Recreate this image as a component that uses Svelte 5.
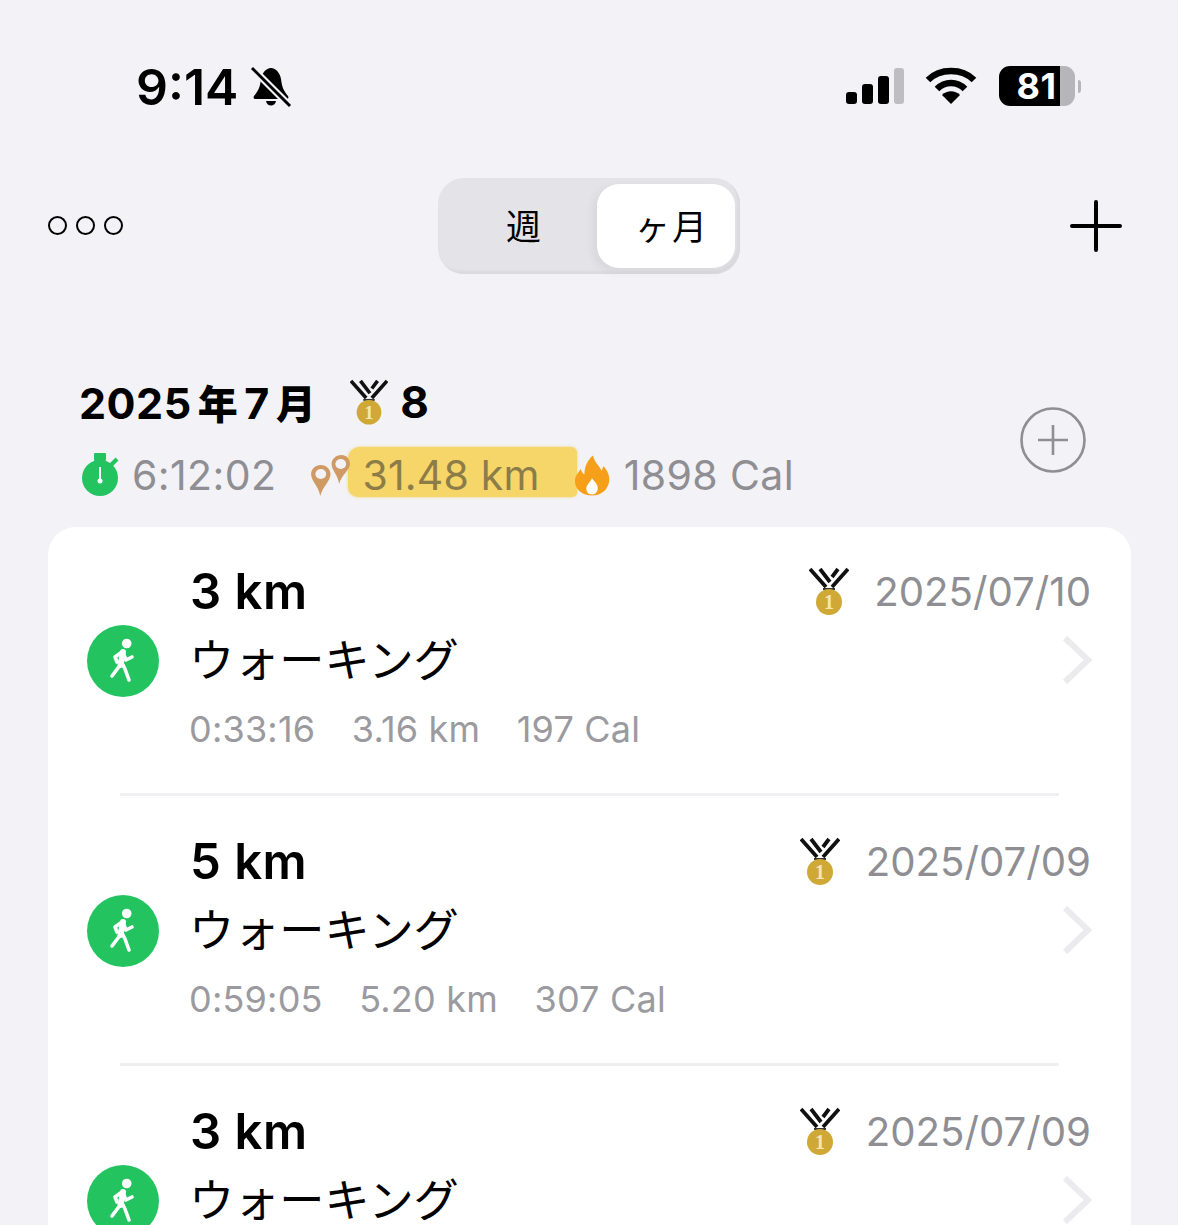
<script>
  const rows = [
    { title: '3 km', date: '2025/07/10', stats: ['0:33:16', '3.16 km', '197 Cal'] },
    { title: '5 km', date: '2025/07/09', stats: ['0:59:05', '5.20 km', '307 Cal'] },
    { title: '3 km', date: '2025/07/09', stats: [] }
  ];
</script>

{#snippet medal(size)}
  <svg class="medal" width={size} height={size * 1.2} viewBox="0 0 40 48" aria-hidden="true">
    <path d="M1 2 L17 20 M11 2 L21 15 M39 2 L23 20 M29 2 L23 10" fill="none" stroke="#111" stroke-width="3.8"/>
    <path d="M14 22 H26" stroke="#333" stroke-width="2"/>
    <circle cx="20" cy="35" r="13" fill="#cfa836"/>
    <text x="20" y="42" text-anchor="middle" class="medal-num">1</text>
  </svg>
{/snippet}

{#snippet chevron()}
  <svg class="chev" width="30" height="48" viewBox="0 0 30 48" aria-hidden="true">
    <path d="M3 2 L26 24 L3 46" fill="none" stroke="#ebebed" stroke-width="6"/>
  </svg>
{/snippet}

{#snippet walker()}
  <svg class="walker" width="72" height="72" viewBox="0 0 72 72" aria-hidden="true">
    <circle cx="36" cy="36" r="36" fill="#23c45f"/>
    <circle cx="39.7" cy="18.5" r="4.8" fill="#fff"/>
    <path d="M36 27 L33.5 40" fill="none" stroke="#fff" stroke-width="6" stroke-linecap="round"/>
    <path d="M34 39 L25 51 M35 38 L38 44 L42 55 M35 27 L28 32 L30 37 M37 30 L39 35 L45 32" fill="none" stroke="#fff" stroke-width="3.6" stroke-linecap="round" stroke-linejoin="round"/>
  </svg>
{/snippet}

<div class="screen">
  <header class="status">
    <div class="clock">
      <span class="time">9:14</span>
      <svg width="42" height="42" viewBox="0 0 42 42" aria-hidden="true">
        <path d="M21 2 C26 2 30 7 31 13 C32 22 34 25 38 30 C39 32 38 33 36 33 H6 C4 33 3 32 4 30 C8 25 10 22 11 13 C12 7 16 2 21 2 Z" fill="#000"/>
        <path d="M16 35 H26 C25 41 17 41 16 35 Z" fill="#000"/>
        <path d="M3 3 L39 39" stroke="#f2f2f7" stroke-width="7"/>
        <path d="M2 2 L40 40" stroke="#000" stroke-width="3"/>
      </svg>
    </div>
    <div class="indicators">
      <svg width="60" height="38" viewBox="0 0 60 38" aria-hidden="true">
        <rect x="1" y="25" width="11" height="12" rx="3" fill="#000"/>
        <rect x="17" y="17" width="11" height="20" rx="3" fill="#000"/>
        <rect x="33" y="9" width="11" height="28" rx="3" fill="#000"/>
        <rect x="49" y="1" width="10" height="36" rx="3" fill="#bdbdc2"/>
      </svg>
      <svg width="52" height="38" viewBox="0 0 52 38" aria-hidden="true">
        <path d="M3 13 C15 1 37 1 49 13" fill="none" stroke="#000" stroke-width="6.5"/>
        <path d="M12 22 C20 14 32 14 40 22" fill="none" stroke="#000" stroke-width="6.5"/>
        <path d="M17 28 C22 23 30 23 35 28 L26 37 Z" fill="#000"/>
      </svg>
      <div class="battery">
        <div class="batt-body"><span>81</span></div>
        <div class="batt-rest"></div>
        <div class="batt-tip"></div>
      </div>
    </div>
  </header>

  <nav class="toolbar">
    <div class="dots"><i></i><i></i><i></i></div>
    <div class="segment">
      <div class="seg-item">週</div>
      <div class="seg-item active">ヶ月</div>
    </div>
    <svg width="54" height="54" viewBox="0 0 54 54" aria-hidden="true">
      <path d="M27 3 V51 M3 27 H51" stroke="#000" stroke-width="4" stroke-linecap="round"/>
    </svg>
  </nav>

  <section class="summary">
    <div class="summary-main">
      <div class="month">
        <span class="month-text">2025<b>年</b>7<b>月</b></span>
        {@render medal(38)}
        <span class="count">8</span>
      </div>
      <div class="totals">
        <svg class="stopwatch" width="38" height="44" viewBox="0 0 38 44" aria-hidden="true">
          <rect x="13" y="0" width="12" height="8" rx="1" fill="#23c45f"/>
          <path d="M30 12 L36 6" stroke="#23c45f" stroke-width="4"/>
          <circle cx="19" cy="25" r="18" fill="#23c45f"/>
          <path d="M19 14 V27" stroke="#fff" stroke-width="2"/>
          <circle cx="19" cy="28" r="2.5" fill="#fff"/>
        </svg>
        <span class="total-value time-total">6:12:02</span>
        <svg class="pins" width="41" height="42" viewBox="0 0 38 42" preserveAspectRatio="none" aria-hidden="true">
          <path d="M29 1 C24 1 20 5 20 10 C20 16 26 21 27 30 C29 21 37 16 37 10 C37 5 34 1 29 1 Z" fill="#cf9a63"/>
          <circle cx="28.5" cy="10" r="5" fill="#f2f2f7"/>
          <path d="M10 11 C5 11 1 15 1 20 C1 27 8 32 9.5 42 C12 32 19 27 19 20 C19 15 15 11 10 11 Z" fill="#cf9a63"/>
          <circle cx="10" cy="20" r="5" fill="#f2f2f7"/>
        </svg>
        <span class="marker">31.48 km</span>
        <svg class="flame" width="36" height="41" viewBox="0 0 38 42" aria-hidden="true">
          <path d="M20 0 C22 8 27 11 29 16 C30 14 31 12 31 11 C36 17 38 22 37 28 C35 37 28 42 19 42 C9 42 1 36 1 27 C1 21 5 18 7 14 C8 17 9 19 11 20 C11 12 14 5 20 0 Z" fill="#f6a01a"/>
          <path d="M19 24 C22 28 26 31 25 36 C24 39 22 41 19 41 C15 41 13 38 13 35 C13 31 17 28 19 24 Z" fill="#fff"/>
        </svg>
        <span class="total-value">1898 Cal</span>
      </div>
    </div>
    <svg class="add" width="66" height="66" viewBox="0 0 66 66" aria-hidden="true">
      <circle cx="33" cy="33" r="31.5" fill="none" stroke="#8e8e93" stroke-width="2.6"/>
      <path d="M33 18 V48 M18 33 H48" stroke="#8e8e93" stroke-width="2.6"/>
    </svg>
  </section>

  <main class="card">
    {#each rows as row}
      <article class="row">
        {@render walker()}
        <div class="body">
          <div class="top">
            <span class="title">{row.title}</span>
            <div class="date-wrap">
              {@render medal(40)}
              <span class="date">{row.date}</span>
            </div>
          </div>
          <div class="mid">
            <span class="name">ウォーキング</span>
            {@render chevron()}
          </div>
          <div class="stats">
            {#each row.stats as stat}<span>{stat}</span>{/each}
          </div>
        </div>
      </article>
    {/each}
  </main>
</div>

<style>
  :global(body) { margin: 0; background: #f2f2f7; }
  .screen {
    width: 1178px; height: 1225px; overflow: hidden; background: #f2f2f7;
    font-family: Inter, "Noto Sans CJK JP", sans-serif; color: #000;
  }
  .status { height: 178px; box-sizing: border-box; padding: 60px 97px 0 136px; display: flex; justify-content: space-between; align-items: flex-start; }
  .clock { display: flex; align-items: center; gap: 12px; height: 54px; }
  .time { font-size: 50px; font-weight: 600; line-height: 54px; }
  .indicators { display: flex; align-items: center; gap: 20px; height: 54px; margin-top: -1px; }
  .battery { display: flex; align-items: center; margin-left: 2px; }
  .batt-body { width: 61px; height: 40px; background: #000; border-radius: 11px 0 0 11px; display: flex; align-items: center; justify-content: center; padding-left: 14px; box-sizing: border-box; }
  .batt-body span { color: #fff; font-size: 36px; font-weight: 700; letter-spacing: 0.5px; }
  .batt-rest { width: 15px; height: 40px; background: #b5b5ba; border-radius: 0 11px 11px 0; }
  .batt-tip { width: 3px; height: 13px; margin-left: 3px; background: #b5b5ba; border-radius: 0 5px 5px 0; }

  .toolbar { height: 96px; padding: 0 55px 0 48px; display: flex; align-items: center; justify-content: space-between; }
  .dots { display: flex; gap: 9px; width: 76px; margin-top: -2px; }
  .dots i { width: 15px; height: 15px; border: 2.5px solid #000; border-radius: 50%; display: block; }
  .segment { width: 302px; height: 96px; box-sizing: border-box; padding: 6px 5px 6px 6px; background: #e3e3e8; border-radius: 26px; display: flex; margin-left: -16px; box-shadow: inset -3px -3px 2px #dadadf; }
  .seg-item { flex: 1; display: flex; align-items: center; justify-content: center; font-size: 35px; padding: 0 0 4px 7px; }
  .seg-item.active { flex: 0 0 138px; box-sizing: border-box; background: #fff; border-radius: 22px; padding: 0 0 4px 13px; letter-spacing: 2px; box-shadow: -4px 3px 10px rgba(0,0,0,0.06); }

  .summary { padding: 99px 92px 0 79px; display: flex; justify-content: space-between; align-items: flex-start; }
  .summary-main { display: flex; flex-direction: column; }
  .month { display: flex; align-items: center; height: 58px; }
  .month-text { font-size: 43px; font-weight: 700; letter-spacing: 0.5px; }
  .month-text b { font-size: 40px; margin: 0 6px; }
  .month .medal { margin: 0 12px 0 28px; }
  .count { font-size: 44px; font-weight: 700; }
  .totals { display: flex; align-items: center; height: 50px; margin-top: 19px; margin-left: 2px; }
  .stopwatch { margin-right: 13px; }
  .total-value { font-size: 41px; color: #8e8e93; letter-spacing: 0.4px; }
  .time-total { margin-right: 34px; }
  .pins { position: relative; z-index: 1; }
  .marker { font-size: 41px; color: #8c7c48; background: #f6d569; box-shadow: 0 0 3px #f6d569; padding: 0 37px 0 14px; height: 50px; line-height: 56px; margin-top: -6px; border-radius: 12px 6px 5px 10px; margin-left: -3px; letter-spacing: 0.2px; }
  .flame { margin: 0 14px 0 -3px; }
  .add { margin-top: 34px; }

  .card { margin: 27px 47px 0 48px; background: #fff; border-radius: 28px 28px 0 0; padding: 0 39px; }
  .row { display: flex; align-items: center; gap: 30px; height: 270px; box-sizing: border-box; border-bottom: 3px solid transparent; position: relative; }
  .row + .row::before { content: ""; position: absolute; top: -4px; left: 33px; right: 33px; height: 3px; background: #f0f0f2; }
  .body { flex: 1; display: flex; flex-direction: column; margin-bottom: 10px; }
  .top { display: flex; justify-content: space-between; align-items: center; height: 60px; }
  .title { font-size: 49px; font-weight: 600; letter-spacing: 0.5px; padding: 2px 0 0 1px; }
  .date-wrap { display: flex; align-items: center; gap: 25.5px; margin-right: 1px; }
  .date { font-size: 40.2px; color: #8e8e93; padding-top: 2px; }
  .mid { display: flex; justify-content: space-between; align-items: center; height: 76px; }
  .name { font-size: 45.2px; margin-bottom: 2px; }
  .chev { margin-top: 2px; }
  .stats { display: flex; gap: 36.5px; font-size: 36px; letter-spacing: 0.2px; color: #9a9a9f; margin-top: 10px; height: 44px; align-items: center; }
  .medal-num { font-family: "Liberation Serif", serif; font-size: 20px; font-weight: 700; fill: #f6e6ae; }
</style>
